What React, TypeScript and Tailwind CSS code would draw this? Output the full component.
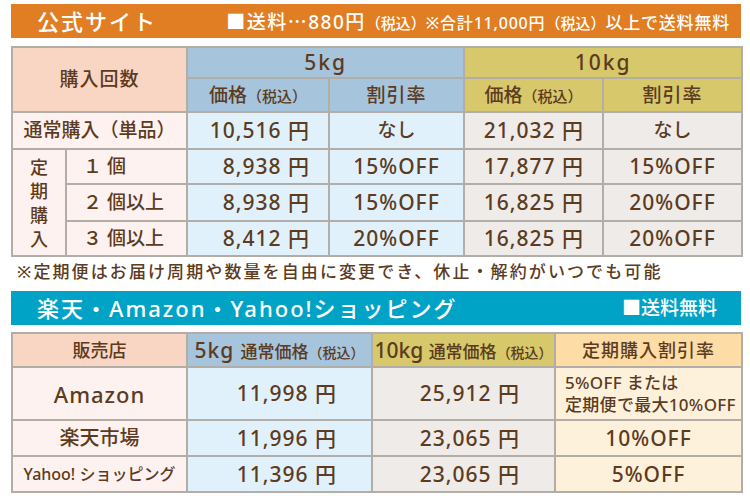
import React from 'react';

const font = { fontFamily: '"Noto Sans", "Noto Sans CJK JP", sans-serif' };
const cjk = { fontFamily: '"Noto Sans CJK JP", sans-serif' };

// Subscription rows for the official site table
const subRows = [
  { label: '１ 個', p5: '8,938 円', d5: '15%OFF', p10: '17,877 円', d10: '15%OFF' },
  { label: '２ 個以上', p5: '8,938 円', d5: '15%OFF', p10: '16,825 円', d10: '20%OFF' },
  { label: '３ 個以上', p5: '8,412 円', d5: '20%OFF', p10: '16,825 円', d10: '20%OFF' },
];

const shops = [
  { name: 'Amazon', p5: '11,998 円', p10: '25,912 円', rate: null },
  { name: '楽天市場', p5: '11,996 円', p10: '23,065 円', rate: '10%OFF' },
  { name: 'Yahoo! ショッピング', p5: '11,396 円', p10: '23,065 円', rate: '5%OFF' },
];

const cell = 'border-2 border-[#b3ada8] p-0';

const App: React.FC = () => {
  return (
    <div className="w-[750px] h-[500px] bg-white text-[#5c3b1e] overflow-hidden" style={font}>
      <div className="ml-[11px] w-[730px] pt-[4px]">
        {/* Official site header */}
        <div className="h-[34px] bg-[#e17d22] text-white flex items-center">
          <span className="pl-[26px] text-[22px] font-medium tracking-[2px] leading-none">公式サイト</span>
          <span className="ml-auto pr-[11px] flex items-baseline leading-none font-medium">
            <span className="text-[19px] tracking-[1.5px]">■送料<span style={cjk}>…</span>880円</span>
            <span className="text-[15px]">（税込）</span>
            <span className="text-[16px] tracking-[0.8px]">※合計11,000円</span>
            <span className="text-[15px]">（税込）</span>
            <span className="text-[17px] tracking-[0.8px]">以上で送料無料</span>
          </span>
        </div>

        <table className="mt-[8px] w-[730px] table-fixed border-collapse font-medium">
          <colgroup>
            <col className="w-[54px]" />
            <col className="w-[121px]" />
            <col className="w-[142px]" />
            <col className="w-[135px]" />
            <col className="w-[139px]" />
            <col className="w-[139px]" />
          </colgroup>
          <tbody>
            <tr className="h-[31px]">
              <td colSpan={2} rowSpan={2} className={`${cell} bg-[#f9d6c4] text-center text-[19px] tracking-[1px]`}>購入回数</td>
              <td colSpan={2} className={`${cell} bg-[#a6c4dc] text-center text-[21px] tracking-[2px] leading-none`}>5kg</td>
              <td colSpan={2} className={`${cell} bg-[#d7c86c] text-center text-[21px] tracking-[2px] leading-none`}>10kg</td>
            </tr>
            <tr className="h-[34px]">
              <td className={`${cell} bg-[#a6c4dc] text-center leading-none`}>
                <span className="text-[19px]">価格</span><span className="text-[15px]">（税込）</span>
              </td>
              <td className={`${cell} bg-[#a6c4dc] text-center text-[19px] tracking-[1px] leading-none`}>割引率</td>
              <td className={`${cell} bg-[#d7c86c] text-center leading-none`}>
                <span className="text-[19px]">価格</span><span className="text-[15px]">（税込）</span>
              </td>
              <td className={`${cell} bg-[#d7c86c] text-center text-[19px] tracking-[1px] leading-none`}>割引率</td>
            </tr>
            <tr className="h-[37px]">
              <td colSpan={2} className={`${cell} bg-[#fdf2ef] text-center text-[19px] leading-none`}>通常購入（単品）</td>
              <td className={`${cell} bg-[#e1f1fb] text-right pr-[18px] text-[21px] tracking-[1px] leading-none`}>10,516 円</td>
              <td className={`${cell} bg-[#e1f1fb] text-center text-[19px] leading-none`}>なし</td>
              <td className={`${cell} bg-[#efebe8] text-right pr-[18px] text-[21px] tracking-[1px] leading-none`}>21,032 円</td>
              <td className={`${cell} bg-[#efebe8] text-center text-[19px] leading-none`}>なし</td>
            </tr>
            {subRows.map((r, i) => (
              <tr key={r.label} className={i === 1 ? 'h-[37px]' : 'h-[35px]'}>
                {i === 0 && (
                  <td rowSpan={3} className={`${cell} bg-[#fdf2ef] text-center`}>
                    <div className="flex flex-col items-center text-[18px] leading-[24px]">
                      <span>定</span><span>期</span><span>購</span><span>入</span>
                    </div>
                  </td>
                )}
                <td className={`${cell} bg-[#fdf2ef] pl-[16px] text-[19px] leading-none`}>{r.label}</td>
                <td className={`${cell} bg-[#e1f1fb] text-right pr-[18px] text-[21px] tracking-[1px] leading-none`}>{r.p5}</td>
                <td className={`${cell} bg-[#e1f1fb] text-center text-[21px] tracking-[1px] leading-none`}>{r.d5}</td>
                <td className={`${cell} bg-[#efebe8] text-right pr-[18px] text-[21px] tracking-[1px] leading-none`}>{r.p10}</td>
                <td className={`${cell} bg-[#efebe8] text-center text-[21px] tracking-[1px] leading-none`}>{r.d10}</td>
              </tr>
            ))}
          </tbody>
        </table>

        <p className="mt-[3px] pl-[6px] text-[17px] tracking-[2.1px] leading-[24px] font-medium whitespace-nowrap">
          ※定期便はお届け周期や数量を自由に変更でき、休止・解約がいつでも可能
        </p>

        {/* Marketplace header */}
        <div className="mt-[7px] h-[34px] bg-[#00a3c6] text-white flex items-center">
          <span className="pl-[26px] text-[22px] font-medium tracking-[2px] leading-none">楽天・Amazon・Yahoo!ショッピング</span>
          <span className="ml-auto pr-[24px] text-[19px] font-medium leading-none">■送料無料</span>
        </div>

        <table className="mt-[7px] w-[730px] table-fixed border-collapse font-medium">
          <colgroup>
            <col className="w-[175px]" />
            <col className="w-[185px]" />
            <col className="w-[183px]" />
            <col className="w-[187px]" />
          </colgroup>
          <tbody>
            <tr className="h-[34px]">
              <td className={`${cell} bg-[#f9d6c4] text-center text-[18px] leading-none`}>販売店</td>
              <td className={`${cell} bg-[#a6c4dc] text-center leading-none whitespace-nowrap`}>
                <span className="text-[21px] tracking-[1px]">5kg </span>
                <span className="text-[17px]">通常価格</span>
                <span className="text-[14px]">（税込）</span>
              </td>
              <td className={`${cell} bg-[#d7c86c] text-center leading-none whitespace-nowrap`}>
                <span className="text-[21px]">10kg </span>
                <span className="text-[17px]">通常価格</span>
                <span className="text-[14px]">（税込）</span>
              </td>
              <td className={`${cell} bg-[#fddca6] text-center text-[18px] tracking-[1px] leading-none`}>定期購入割引率</td>
            </tr>
            {shops.map((s, i) => (
              <tr key={s.name} className={i === 0 ? 'h-[53px]' : 'h-[36px]'}>
                <td className={`${cell} bg-[#fdf2ef] text-center leading-none whitespace-nowrap ${i === 0 ? 'text-[22px] tracking-[1px]' : i === 1 ? 'text-[20px]' : 'text-[16px]'}`}>{s.name}</td>
                <td className={`${cell} bg-[#e1f1fb] text-right pr-[34px] text-[21px] tracking-[1px] leading-none`}>{s.p5}</td>
                <td className={`${cell} bg-[#efebe8] text-right pr-[34px] text-[21px] tracking-[1px] leading-none`}>{s.p10}</td>
                <td className={`${cell} bg-[#fef1dc] leading-none`}>
                  {s.rate ? (
                    <div className="text-center text-[21px] tracking-[1px]">{s.rate}</div>
                  ) : (
                    <div className="pl-[9px] text-[17px] tracking-[0.3px] leading-[22px] whitespace-nowrap">
                      <div>5%OFF または</div>
                      <div>定期便で最大10%OFF</div>
                    </div>
                  )}
                </td>
              </tr>
            ))}
          </tbody>
        </table>
      </div>
    </div>
  );
};

export default App;
